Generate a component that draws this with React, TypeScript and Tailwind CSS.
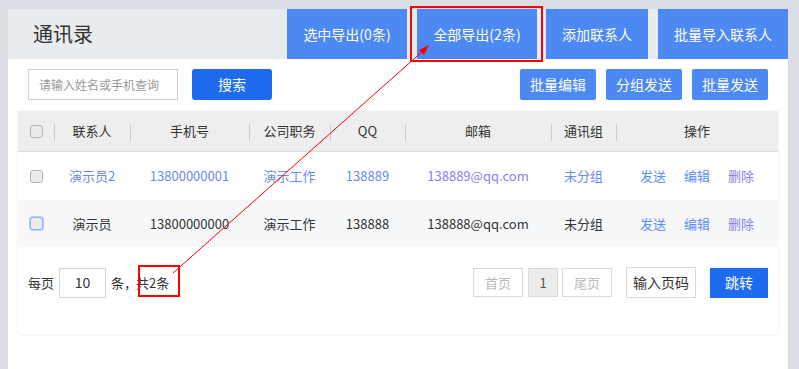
import type { ReactNode } from 'react';

const FONT = "font-['Noto_Sans_CJK_SC','Noto_Sans',sans-serif]";

const cols = [
  { key: 'check', label: '', w: 'w-[36px]' },
  { key: 'name', label: '联系人', w: 'w-[76px]' },
  { key: 'phone', label: '手机号', w: 'w-[119px]' },
  { key: 'job', label: '公司职务', w: 'w-[81px]' },
  { key: 'qq', label: 'QQ', w: 'w-[75px]' },
  { key: 'mail', label: '邮箱', w: 'w-[146px]' },
  { key: 'group', label: '通讯组', w: 'w-[65px]' },
  { key: 'ops', label: '操作', w: 'flex-1' },
];

const rows = [
  {
    name: '演示员2',
    phone: '13800000001',
    job: '演示工作',
    qq: '138889',
    mail: '138889@qq.com',
    group: '未分组',
    link: true,
  },
  {
    name: '演示员',
    phone: '13800000000',
    job: '演示工作',
    qq: '138888',
    mail: '138888@qq.com',
    group: '未分组',
    link: false,
  },
];

function Checkbox({ focus = false }: { focus?: boolean }) {
  return (
    <span
      className={`block h-[13px] w-[13px] rounded-[3px] border bg-[#ebebeb] ${
        focus ? 'border-[#8db3f5] shadow-[0_0_0_1px_#b9d1fa]' : 'border-[#b5b5b5]'
      }`}
    />
  );
}

function TopBtn({ w, children }: { w: string; children: ReactNode }) {
  return (
    <div className={`${w} flex h-full items-center justify-center bg-[#4d89f2] text-[14px] text-white`}>
      {children}
    </div>
  );
}

function ToolBtn({ children }: { children: ReactNode }) {
  return (
    <div className="flex h-[31px] w-[76px] items-center justify-center rounded-[2px] bg-[#4d89f2] text-[14px] text-white">
      {children}
    </div>
  );
}

function PageBox({ w, children, cls = '' }: { w: string; children: ReactNode; cls?: string }) {
  return (
    <div
      className={`${w} flex h-[29px] items-center justify-center border border-[#d9d9d9] text-[13px] ${cls}`}
    >
      {children}
    </div>
  );
}

export default function App() {
  return (
    <div className={`${FONT} relative h-[369px] w-[799px] overflow-hidden bg-[#dadde3] pl-[8px] pr-[11px] pt-[9px]`}>
      <div className="flex h-full flex-col bg-white">
        {/* header */}
        <div className="flex h-[50px] items-stretch bg-[#e9ecef]">
          <div className="flex flex-1 items-center pl-[25px] text-[20px] text-[#333]">通讯录</div>
          <TopBtn w="w-[120px]">选中导出(0条)</TopBtn>
          <div className="w-[10px]" />
          <TopBtn w="w-[120px]">全部导出(2条)</TopBtn>
          <div className="w-[9px]" />
          <TopBtn w="w-[102px]">添加联系人</TopBtn>
          <div className="w-[10px]" />
          <TopBtn w="w-[130px]">批量导入联系人</TopBtn>
        </div>

        {/* toolbar */}
        <div className="mt-[10px] flex items-center px-[20px]">
          <div className="flex h-[31px] w-[150px] items-center whitespace-nowrap border border-[#cfcfcf] pl-[10px] text-[12px] text-[#999]">
            请输入姓名或手机查询
          </div>
          <div className="ml-[14px] flex h-[31px] w-[80px] items-center justify-center rounded-[3px] bg-[#1e6bf0] text-[14px] text-white">
            搜索
          </div>
          <div className="flex-1" />
          <div className="flex gap-[10px]">
            <ToolBtn>批量编辑</ToolBtn>
            <ToolBtn>分组发送</ToolBtn>
            <ToolBtn>批量发送</ToolBtn>
          </div>
        </div>

        {/* card */}
        <div className="mx-[10px] mt-[11px] h-[223px] rounded-b-[5px] shadow-[0_1px_3px_rgba(0,0,0,0.08)]">
          <div className="flex h-[41px] items-center border-b border-[#dcdcdc] bg-[#eeeeee] text-[13px] text-[#333]">
            {cols.map((c, i) => (
              <div key={c.key} className={`${c.w} relative flex h-full items-center justify-center`}>
                {i > 0 && <span className="absolute left-0 top-[13px] h-[17px] w-px bg-[#cccccc]" />}
                {c.key === 'check' ? <Checkbox /> : c.label}
              </div>
            ))}
          </div>

          {rows.map((r, i) => (
            <div
              key={r.name}
              className={`flex items-center text-[13px] ${i === 0 ? 'h-[48px] bg-white' : 'h-[47px] bg-[#f7f8fa]'} ${
                r.link ? 'text-[#6a8af3]' : 'text-[#333]'
              }`}
            >
              <div className="flex w-[36px] justify-center">
                <Checkbox focus={i === 1} />
              </div>
              <div className="w-[76px] text-center">{r.name}</div>
              <div className="w-[119px] text-center">{r.phone}</div>
              <div className="w-[81px] text-center">{r.job}</div>
              <div className="w-[75px] text-center">{r.qq}</div>
              <div className={`w-[146px] text-center ${r.link ? 'text-[#8a7ef2]' : ''}`}>{r.mail}</div>
              <div className="w-[65px] text-center">{r.group}</div>
              <div className="flex flex-1 justify-center gap-[18px]">
                <span className="text-[#5d8cf3]">发送</span>
                <span className="text-[#5d8cf3]">编辑</span>
                <span className="text-[#8a7ef2]">删除</span>
              </div>
            </div>
          ))}

          {/* pagination */}
          <div className="mt-[20px] flex items-center px-[10px] text-[13px] text-[#333]">
            <span>每页</span>
            <div className="ml-[5px] flex h-[30px] w-[47px] items-center justify-center border border-[#cfd6de] text-[14px]">
              10
            </div>
            <span className="ml-[5px]">条，</span>
            <span className="-ml-[1px]">共2条</span>
            <div className="flex-1" />
            <PageBox w="w-[50px]" cls="text-[#bbbbbb]">首页</PageBox>
            <PageBox w="w-[30px]" cls="ml-[5px] bg-[#ececec] text-[#555]">1</PageBox>
            <PageBox w="w-[50px]" cls="ml-[4px] text-[#bbbbbb]">尾页</PageBox>
            <div className="ml-[14px] flex h-[31px] w-[70px] items-center justify-center border border-[#d9d9d9] text-[14px] text-[#333]">
              输入页码
            </div>
            <div className="ml-[14px] flex h-[30px] w-[58px] items-center justify-center bg-[#1e6bf0] text-[14px] text-white">
              跳转
            </div>
          </div>
        </div>
      </div>

      {/* annotation overlay */}
      <svg className="pointer-events-none absolute left-0 top-0" width="799" height="369">
        <rect x="411" y="7" width="131" height="54" fill="none" stroke="#ff0000" strokeWidth="2" />
        <rect x="139" y="266" width="40" height="30" fill="none" stroke="#ff0000" strokeWidth="2" />
        <line x1="173" y1="273" x2="424" y2="50" stroke="#ff0000" strokeWidth="1" />
        <polygon points="429,45 419,50 424,55" fill="#ff0000" />
      </svg>
    </div>
  );
}
